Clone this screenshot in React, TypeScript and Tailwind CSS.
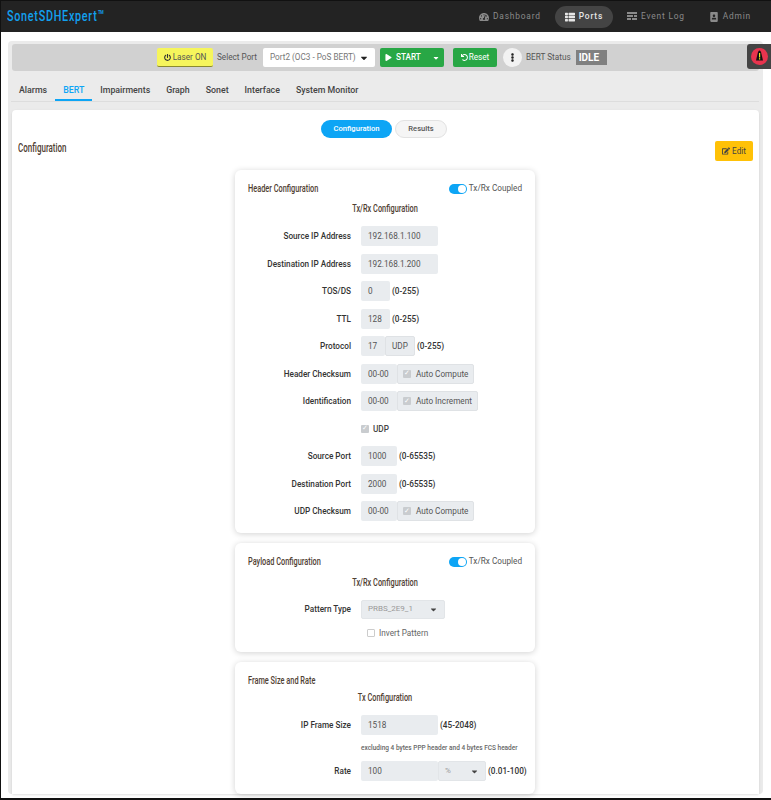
import React from "react";
import { FaTachometerAlt, FaThList, FaPortrait, FaPlay, FaUndo, FaEdit, FaPowerOff, FaEllipsisV, FaCaretDown } from "react-icons/fa";

const Title = ({ children, cls = "" }: { children: React.ReactNode; cls?: string }) => (
  <div className={"whitespace-nowrap font-['Roboto',sans-serif] font-medium text-[#4f4032] scale-x-[0.64] " + cls}>{children}</div>
);

const Toggle = () => (
  <div className="flex items-center gap-[2px] whitespace-nowrap text-[8.2px] text-[#555]">
    <span className="flex h-[10px] w-[18px] items-center justify-end rounded-full bg-[#0da5f5] pr-[1px]">
      <span className="h-[8px] w-[8px] rounded-full bg-white" />
    </span>
    <span>Tx/Rx Coupled</span>
  </div>
);

const Row = ({ label, children }: { label?: string; children: React.ReactNode }) => (
  <div className="flex h-[27.5px] items-center whitespace-nowrap">
    <div className="w-[103px] shrink-0 text-right text-[8.2px] font-medium text-[#333]">{label}</div>
    <div className="ml-[10px] flex items-center">{children}</div>
  </div>
);

const Input = ({ w, children, cls = "" }: { w: string; children: React.ReactNode; cls?: string }) => (
  <div className={"flex h-[20px] items-center rounded-[2px] bg-[#e9ecef] pl-[7px] text-[8.2px] text-[#555] " + w + " " + cls}>{children}</div>
);

const Hint = ({ children }: { children: React.ReactNode }) => (
  <span className="ml-[2px] text-[8.2px] font-medium text-[#333]">{children}</span>
);

const Check = ({ on = true }: { on?: boolean }) =>
  on ? (
    <span className="flex h-[8px] w-[8px] items-center justify-center rounded-[1px] bg-[#c9cccf] text-[7px] leading-none text-white">✓</span>
  ) : (
    <span className="h-[8px] w-[8px] rounded-[1px] border border-[#ccc] bg-white" />
  );

const Addon = ({ children, w }: { children: React.ReactNode; w: string }) => (
  <div className={"flex h-[20px] items-center gap-[5px] rounded-[2px] border border-[#dfe2e5] bg-[#e9ecef] pl-[5px] text-[8.2px] text-[#555] " + w}>
    <Check />
    {children}
  </div>
);

const NavItem = ({ icon, label, active }: { icon: React.ReactNode; label: string; active?: boolean }) => (
  <div className={"flex h-[22px] items-center gap-[4px] rounded-full px-[10px] text-[8.4px] tracking-[0.8px] " + (active ? "bg-[#444] font-medium text-[#e6e6e6]" : "text-[#8a8a8a]")}>
    <span className="text-[10px]">{icon}</span>
    {label}
  </div>
);

const EventIcon = () => (
  <svg width="10" height="9" viewBox="0 0 10 9" fill="currentColor">
    <rect x="0" y="0" width="10" height="2" />
    <rect x="0" y="3" width="6" height="2" />
    <rect x="7" y="3" width="3" height="2" />
    <rect x="0" y="6" width="4" height="2" />
    <rect x="5" y="6" width="5" height="2" />
  </svg>
);

const Tab = ({ label, active }: { label: string; active?: boolean }) => (
  <div className={"flex h-[30px] items-center border-b-2 px-[8px] pt-[12px] text-[8.8px] font-medium " + (active ? "border-[#0da5f5] text-[#0da5f5]" : "border-transparent text-[#444]")}>{label}</div>
);

export default function App() {
  return (
    <div className="h-[800px] w-[771px] overflow-hidden border-b-2 border-l border-t border-[#111] bg-white font-['Roboto',sans-serif]">
      <header className="flex h-[31px] items-center justify-between bg-[#232323] pl-[6px] pr-[10px]">
        <div className="origin-left scale-x-[0.72] whitespace-nowrap text-[15px] font-medium tracking-[1px] text-[#12a0ef]">SonetSDHExpert™</div>
        <nav className="flex items-center gap-[4px]">
          <NavItem icon={<FaTachometerAlt />} label="Dashboard" />
          <NavItem icon={<FaThList />} label="Ports" active />
          <NavItem icon={<EventIcon />} label="Event Log" />
          <NavItem icon={<FaPortrait />} label="Admin" />
        </nav>
      </header>

      <main className="relative ml-[7px] mr-[8px] mt-[9px] rounded-[4px] bg-[#ebebeb] px-[4px] pt-[3px]">
        <div className="flex h-[27px] items-center whitespace-nowrap rounded-[3px] bg-[#d1d1d1] pl-[145px] text-[8.2px] text-[#555]">
          <div className="flex h-[19px] w-[56px] items-center justify-center gap-[2px] rounded-[2px] border-b border-[#8a8a30] bg-[#f6f55c] text-[#555]">
            <FaPowerOff className="text-[7px] text-[#333]" />
            Laser ON
          </div>
          <span className="ml-[4px]">Select Port</span>
          <div className="ml-[6px] flex h-[19px] w-[112px] items-center justify-between rounded-[2px] bg-white pl-[7px] pr-[6px] text-[#777]">
            Port2 (OC3 - PoS BERT)
            <FaCaretDown className="text-[10px] text-[#222]" />
          </div>
          <div className="ml-[5px] flex h-[19px] w-[64px] items-center rounded-[2px] bg-[#28a745] pl-[5px] font-medium text-white">
            <FaPlay className="mr-[4px] text-[7px]" />
            START
            <FaCaretDown className="ml-auto mr-[4px] text-[8px]" />
          </div>
          <div className="ml-[9px] flex h-[19px] w-[44px] items-center justify-center gap-[1px] rounded-[2px] bg-[#28a745] text-white">
            <FaUndo className="text-[7px]" />
            Reset
          </div>
          <div className="ml-[6px] flex h-[19px] w-[19px] items-center justify-center rounded-full bg-[#f2f2f2] text-[9px] text-[#222]">
            <FaEllipsisV />
          </div>
          <span className="ml-[4px]">BERT Status</span>
          <div className="ml-[5px] flex h-[15px] w-[31px] items-center bg-[#808080] pl-[3px] text-[10px] font-bold text-white">IDLE</div>
        </div>

        <div className="absolute right-[-9px] top-[3px] flex h-[25px] w-[25px] items-center justify-center rounded-l-[3px] bg-[#444]">
          <svg width="17" height="17" viewBox="0 0 17 17">
            <circle cx="8.5" cy="8.5" r="8.5" fill="#e8344e" />
            <path d="M8.5 2.5 C9.5 2.5 10 4 10.5 6 L12 12.5 H5 L6.5 6 C7 4 7.5 2.5 8.5 2.5 Z" fill="#111" />
            <rect x="8" y="5" width="1.2" height="4.5" fill="#f5e71e" />
            <rect x="8" y="10.2" width="1.2" height="1.3" fill="#f5e71e" />
          </svg>
        </div>

        <div className="ml-[-1px] flex h-[31px] items-end border-b border-[#ddd]">
          <Tab label="Alarms" />
          <Tab label="BERT" active />
          <Tab label="Impairments" />
          <Tab label="Graph" />
          <Tab label="Sonet" />
          <Tab label="Interface" />
          <Tab label="System Monitor" />
        </div>

        <section className="mt-[8px] rounded-t-[4px] bg-white px-[6px] pt-[10px] shadow">
          <div className="flex justify-center gap-[3px] pr-[3px]">
            <div className="flex h-[18px] w-[71px] items-center justify-center rounded-full bg-[#0da5f5] text-[7.6px] font-medium text-white">Configuration</div>
            <div className="flex h-[18px] w-[52px] items-center justify-center rounded-full border border-[#e2e2e2] bg-[#f5f5f5] text-[7.6px] font-medium text-[#555]">Results</div>
          </div>
          <div className="mt-[-6px] flex items-start justify-between pb-[9px]">
            <Title cls="mt-[7px] origin-left text-[12.5px]">Configuration</Title>
            <div className="ml-auto mt-[9px] flex h-[20px] w-[38px] items-center justify-center gap-[2px] rounded-[2px] bg-[#ffc107] text-[8.2px] text-[#444]">
              <FaEdit className="text-[8px]" />
              Edit
            </div>
          </div>

          <div className="flex w-[300px] flex-col gap-[10px]" style={{ marginLeft: 217 }}>
            <div className="rounded-[6px] bg-white px-[13px] pb-[8px] pt-[10px] shadow-[0_1px_6px_rgba(0,0,0,0.18)]">
              <div className="flex items-center justify-between"><Title cls="origin-left text-[11.5px]">Header Configuration</Title><Toggle /></div>
              <Title cls="mb-[5px] mt-[3px] text-center text-[11.5px]">Tx/Rx Configuration</Title>
              <Row label="Source IP Address"><Input w="w-[77px]">192.168.1.100</Input></Row>
              <Row label="Destination IP Address"><Input w="w-[77px]">192.168.1.200</Input></Row>
              <Row label="TOS/DS"><Input w="w-[29px]">0</Input><Hint>(0-255)</Hint></Row>
              <Row label="TTL"><Input w="w-[29px]">128</Input><Hint>(0-255)</Hint></Row>
              <Row label="Protocol"><Input w="w-[24px]">17</Input><div className="flex h-[20px] w-[30px] items-center justify-center rounded-[2px] border border-[#dfe2e5] bg-[#e9ecef] text-[8.2px] text-[#555]">UDP</div><Hint>(0-255)</Hint></Row>
              <Row label="Header Checksum"><Input w="w-[36px]">00-00</Input><Addon w="w-[77px]">Auto Compute</Addon></Row>
              <Row label="Identification"><Input w="w-[36px]">00-00</Input><Addon w="w-[81px]">Auto Increment</Addon></Row>
              <Row><Check /><span className="ml-[4px] text-[8.2px] font-medium text-[#444]">UDP</span></Row>
              <Row label="Source Port"><Input w="w-[36px]">1000</Input><Hint>(0-65535)</Hint></Row>
              <Row label="Destination Port"><Input w="w-[36px]">2000</Input><Hint>(0-65535)</Hint></Row>
              <Row label="UDP Checksum"><Input w="w-[36px]">00-00</Input><Addon w="w-[77px]">Auto Compute</Addon></Row>
            </div>

            <div className="rounded-[6px] bg-white px-[13px] pb-[12px] pt-[10px] shadow-[0_1px_6px_rgba(0,0,0,0.18)]">
              <div className="flex items-center justify-between"><Title cls="origin-left text-[11.5px]">Payload Configuration</Title><Toggle /></div>
              <Title cls="mb-[4px] mt-[4px] text-center text-[11.5px]">Tx/Rx Configuration</Title>
              <Row label="Pattern Type">
                <div className="flex h-[19px] w-[84px] items-center justify-between rounded-[2px] border border-[#e2e5e8] bg-[#e9ecef] pl-[6px] pr-[6px] text-[8px] text-[#999]">PRBS_2E9_1<FaCaretDown className="text-[9px] text-[#444]" /></div>
              </Row>
              <div className="mt-[3px] flex h-[14px] items-center whitespace-nowrap pl-[119px] text-[8.2px] text-[#666]"><Check on={false} /><span className="ml-[4px]">Invert Pattern</span></div>
            </div>

            <div className="rounded-[6px] bg-white px-[13px] pb-[9px] pt-[10px] shadow-[0_1px_6px_rgba(0,0,0,0.18)]">
              <Title cls="origin-left text-[11.5px]">Frame Size and Rate</Title>
              <Title cls="mb-[5px] text-center text-[11.5px]">Tx Configuration</Title>
              <Row label="IP Frame Size"><Input w="w-[77px]">1518</Input><Hint>(45-2048)</Hint></Row>
              <div className="mt-[1px] flex h-[17.5px] items-center whitespace-nowrap pl-[113px] text-[6.5px] font-medium text-[#666]">excluding 4 bytes PPP header and 4 bytes FCS header</div>
              <Row label="Rate">
                <Input w="w-[77px]">100</Input>
                <div className="flex h-[20px] w-[48px] items-center justify-between rounded-[2px] border border-[#e2e5e8] bg-[#e9ecef] pl-[6px] pr-[6px] text-[8px] text-[#999]">%<FaCaretDown className="text-[9px] text-[#444]" /></div>
                <Hint>(0.01-100)</Hint>
              </Row>
            </div>
          </div>
        </section>
      </main>
    </div>
  );
}
